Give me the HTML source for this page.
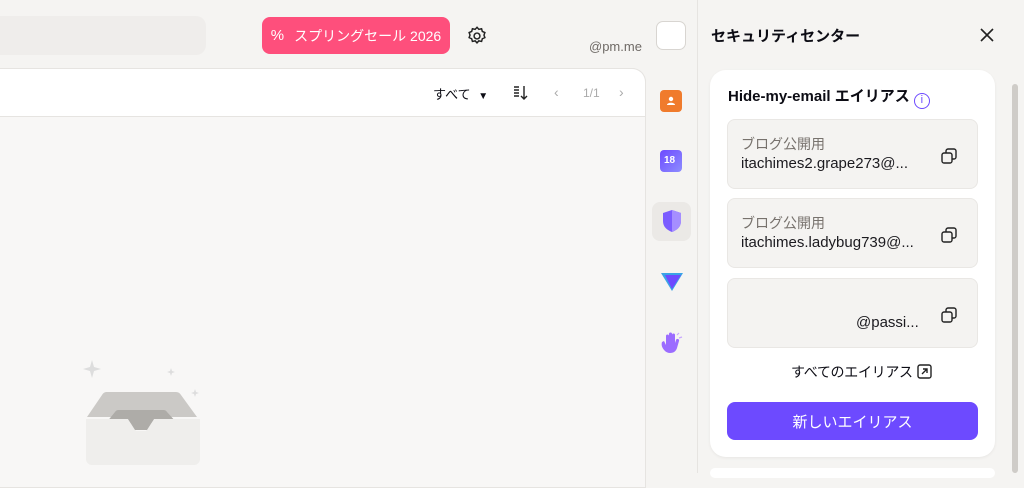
<!DOCTYPE html>
<html><head><meta charset="utf-8"><style>
*{box-sizing:border-box;margin:0;padding:0}
body{width:1024px;height:473px;overflow:hidden;background:#f5f4f2;font-family:"Liberation Sans","Noto Sans CJK JP",sans-serif;position:relative;color:#0c0c14}
.a{position:absolute}
.search{left:-10px;top:16px;width:216px;height:39px;background:#efedeb;border-radius:10px}
.sale{left:262px;top:17px;width:188px;height:37px;background:#fe4f7c;border-radius:8px;color:#fff;font-size:14px;display:flex;align-items:center;justify-content:center;gap:10px}
.main{left:0;top:68px;width:646px;height:420px;background:#f8f7f6;border:1px solid #e6e4e1;border-left:none;border-radius:0 14px 0 0}
.tb{left:0;top:68px;width:646px;height:49px;background:#fff;border:1px solid #e6e4e1;border-left:none;border-radius:0 14px 0 0}
.panel{left:697px;top:0;width:327px;height:473px;background:#f5f4f2;border-left:1px solid #e6e4e1}
.card{left:710px;top:70px;width:285px;height:387px;background:#fff;border-radius:16px;box-shadow:0 1px 3px rgba(0,0,0,.06)}
.al{left:727px;width:251px;height:70px;background:#f4f3f1;border:1px solid #e9e7e4;border-radius:8px}
.al .l{position:absolute;left:13px;top:14px;font-size:14px;color:#77726d}
.al .e{position:absolute;left:13px;top:35px;font-size:15px;color:#1b1a1f}
.al svg{position:absolute;right:19px;top:27px}
.btn{left:727px;top:402px;width:251px;height:38px;background:#6d4aff;border-radius:8px;color:#fff;font-size:15px;display:flex;align-items:center;justify-content:center}
.ic{width:22px;height:22px;border-radius:4px}
</style></head><body>
<div class="a search"></div>
<div class="a sale"><span style="font-size:15px">%</span><span>スプリングセール 2026</span></div>
<svg class="a" style="left:466px;top:25px" width="22" height="22" viewBox="0 0 24 24" fill="none" stroke="#222" stroke-width="1.6"><circle cx="12" cy="12" r="3.2"/><path d="M12 2.5l2 2.2 3-.6.8 2.9 2.8 1.2-1 2.8 1 2.8-2.8 1.2-.8 2.9-3-.6-2 2.2-2-2.2-3 .6-.8-2.9-2.8-1.2 1-2.8-1-2.8 2.8-1.2.8-2.9 3 .6z"/></svg>
<div class="a" style="left:589px;top:39px;font-size:13px;color:#6f6a66">@pm.me</div>
<div class="a" style="left:656px;top:21px;width:30px;height:29px;border:1px solid #d8d5d1;border-radius:7px;background:#fff"></div>
<div class="a main"></div>
<div class="a tb"></div>
<div class="a" style="left:433px;top:84px;font-size:13px">すべて <span style="font-size:10px;margin-left:4px">▼</span></div>
<svg class="a" style="left:512px;top:84px" width="18" height="18" viewBox="0 0 18 18" stroke="#222" stroke-width="1.4" fill="none"><path d="M2 3h5M2 6h5M2 9h5M2 12h5M12 2v13M9 12l3 3 3-3"/></svg>
<div class="a" style="left:554px;top:84px;font-size:14px;color:#aaa">‹</div>
<div class="a" style="left:583px;top:86px;font-size:12px;color:#aaa">1/1</div>
<div class="a" style="left:619px;top:84px;font-size:14px;color:#aaa">›</div>
<!-- empty inbox -->
<svg class="a" style="left:78px;top:352px" width="130" height="121" viewBox="0 0 130 121"><path d="M14 8l2 7 7 2-7 2-2 7-2-7-7-2 7-2z" fill="#ddd"/><path d="M93 16l1 3 3 1-3 1-1 3-1-3-3-1 3-1z" fill="#ddd"/><path d="M117 37l1 3 3 1-3 1-1 3-1-3-3-1 3-1z" fill="#ddd"/><path d="M28 40h70a6 6 0 0 1 5 3l16 22H9l15-22a6 6 0 0 1 4-3z" fill="#cbc9c6"/><path d="M40 58h46a4 4 0 0 1 3 2l10 11H28l9-11a4 4 0 0 1 3-2z" fill="#aeaca8"/><path d="M8 67h42l8 12h10l8-12h46v40a6 6 0 0 1-6 6H14a6 6 0 0 1-6-6z" fill="#efeeec"/><path d="M50 67l7 11h12l7-11z" fill="#aeaca8"/></svg>
<!-- sidebar icons -->
<div class="a ic" style="left:660px;top:90px;background:#f07b2c"></div>
<svg class="a" style="left:665px;top:95px" width="12" height="12" viewBox="0 0 12 12" fill="#fff"><circle cx="6" cy="4" r="2.2"/><path d="M2 10c0-3 8-3 8 0z"/></svg>
<div class="a ic" style="left:660px;top:150px;background:linear-gradient(135deg,#6d4aff,#8d8dff)"></div>
<div class="a" style="left:664px;top:155px;color:#fff;font-size:10px;font-weight:bold">18</div>
<div class="a" style="left:652px;top:202px;width:39px;height:39px;background:#ebe9e6;border-radius:8px"></div>
<svg class="a" style="left:661px;top:209px" width="22" height="24" viewBox="0 0 22 24"><path d="M11 1l9 3v8c0 6-4 9-9 11C6 21 2 18 2 12V4z" fill="#7b5cff"/><path d="M11 1l9 3v8c0 6-4 9-9 11z" fill="#a58eff"/></svg>
<svg class="a" style="left:660px;top:272px" width="24" height="20" viewBox="0 0 24 20"><path d="M1 1h22L12 19z" fill="#3aa3e6"/><path d="M5 3h16l-9 14z" fill="#6d4aff"/></svg>
<svg class="a" style="left:659px;top:331px" width="24" height="24" viewBox="0 0 24 24"><path d="M6 20c-3-3-4-6-3-9l2-1 2 4V5a1.5 1.5 0 0 1 3 0v5V3a1.5 1.5 0 0 1 3 0v7V4a1.5 1.5 0 0 1 3 0v8l1-3a1.5 1.5 0 0 1 3 1l-2 7c-1 3-3 5-7 5-2 0-4-1-5-2z" fill="#9b6cff"/><path d="M18 4l2-2M20 7l3-1" stroke="#c9a8ff" stroke-width="1.2"/></svg>
<!-- right panel -->
<div class="a panel"></div>
<div class="a" style="left:711px;top:25px;font-size:15px;font-weight:bold">セキュリティセンター</div>
<svg class="a" style="left:979px;top:27px" width="16" height="16" stroke="#222" stroke-width="1.6"><path d="M2 2l12 12M14 2L2 14"/></svg>
<div class="a" style="left:1012px;top:84px;width:6px;height:389px;background:#cfccc8;border-radius:3px"></div>
<div class="a card"></div>
<div class="a" style="left:728px;top:85px;font-size:15px;font-weight:bold">Hide-my-email エイリアス <span style="display:inline-block;width:16px;height:16px;border:1.5px solid #6d4aff;border-radius:50%;color:#6d4aff;font-size:11px;text-align:center;line-height:13px;font-weight:normal;vertical-align:-2px">i</span></div>
<div class="a al" style="top:119px"><div class="l">ブログ公開用</div><div class="e">itachimes2.grape273@...</div><svg width="18" height="18" viewBox="0 0 18 18" fill="none" stroke="#222" stroke-width="1.4"><rect x="2" y="6" width="10" height="10" rx="2"/><path d="M6 6V4a2 2 0 0 1 2-2h6a2 2 0 0 1 2 2v6a2 2 0 0 1-2 2h-2"/></svg></div>
<div class="a al" style="top:198px"><div class="l">ブログ公開用</div><div class="e">itachimes.ladybug739@...</div><svg width="18" height="18" viewBox="0 0 18 18" fill="none" stroke="#222" stroke-width="1.4"><rect x="2" y="6" width="10" height="10" rx="2"/><path d="M6 6V4a2 2 0 0 1 2-2h6a2 2 0 0 1 2 2v6a2 2 0 0 1-2 2h-2"/></svg></div>
<div class="a al" style="top:278px"><div class="e" style="left:128px">@passi...</div><svg width="18" height="18" viewBox="0 0 18 18" fill="none" stroke="#222" stroke-width="1.4"><rect x="2" y="6" width="10" height="10" rx="2"/><path d="M6 6V4a2 2 0 0 1 2-2h6a2 2 0 0 1 2 2v6a2 2 0 0 1-2 2h-2"/></svg></div>
<div class="a" style="left:791px;top:362px;font-size:14px;letter-spacing:-0.3px">すべてのエイリアス<svg width="15" height="15" viewBox="0 0 15 15" fill="none" stroke="#222" stroke-width="1.4" style="vertical-align:-2px;margin-left:4px"><rect x="1" y="1" width="13" height="13" rx="2"/><path d="M5 10l5-5M6 5h4v4"/></svg></div>
<div class="a btn">新しいエイリアス</div>
<div class="a" style="left:710px;top:468px;width:285px;height:10px;background:#fff;border-radius:12px"></div>
</body></html>
